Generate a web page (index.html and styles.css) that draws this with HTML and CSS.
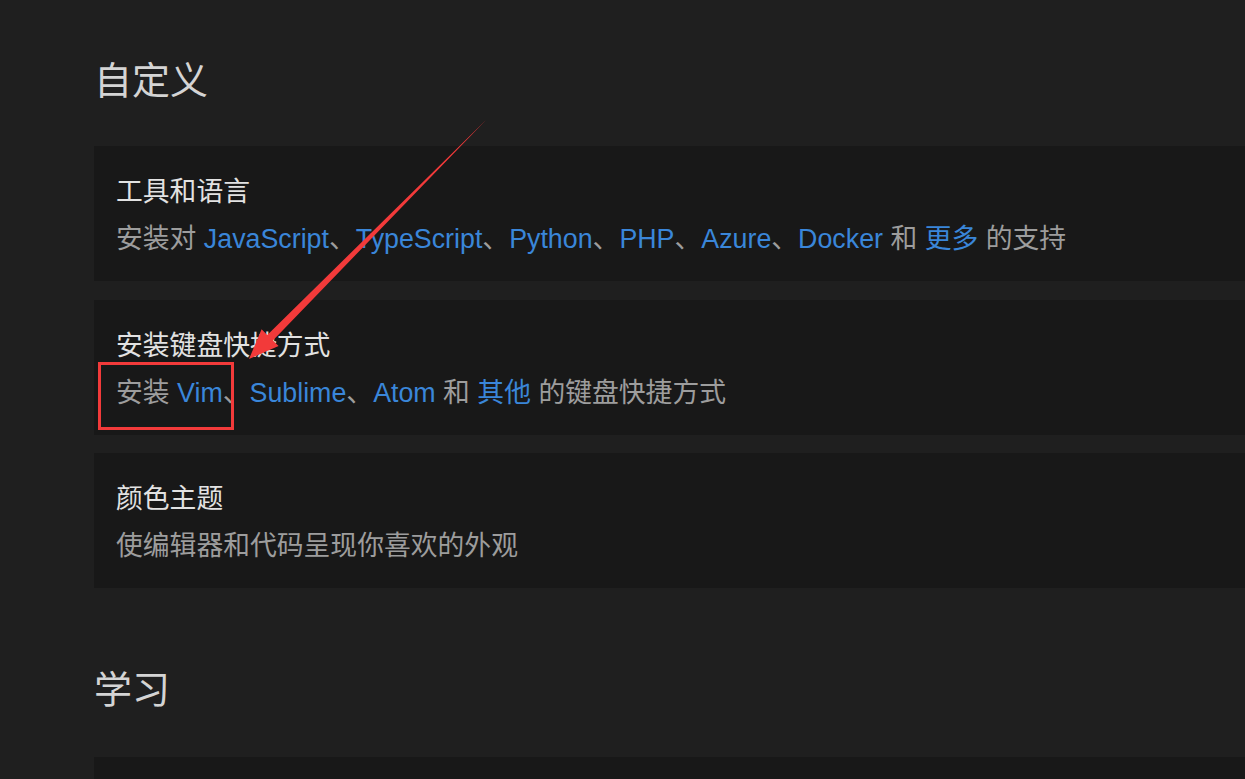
FILE: index.html
```html
<!DOCTYPE html>
<html lang="zh-CN">
<head>
<meta charset="utf-8">
<title>自定义</title>
<link rel="stylesheet" href="styles.css">
</head>
<body>
<main class="page">
  <section class="section">
    <h2 class="heading">自定义</h2>
    <div class="cards">
      <div class="card">
        <div class="card-title">工具和语言</div>
        <div class="card-desc">安装对 <a class="link">JavaScript</a>、<a class="link">TypeScript</a>、<a class="link">Python</a>、<a class="link">PHP</a>、<a class="link">Azure</a>、<a class="link">Docker</a> 和 <a class="link">更多</a> 的支持</div>
      </div>
      <div class="card">
        <div class="card-title">安装键盘快捷方式</div>
        <div class="card-desc">安装 <a class="link">Vim</a>、<a class="link">Sublime</a>、<a class="link">Atom</a> 和 <a class="link">其他</a> 的键盘快捷方式</div>
      </div>
      <div class="card">
        <div class="card-title">颜色主题</div>
        <div class="card-desc">使编辑器和代码呈现你喜欢的外观</div>
      </div>
    </div>
  </section>
  <section class="section section-learn">
    <h2 class="heading">学习</h2>
    <div class="cards cards-learn">
      <div class="card card-peek"></div>
    </div>
  </section>
</main>
<svg class="annotations" width="1245" height="779" viewBox="0 0 1245 779" xmlns="http://www.w3.org/2000/svg">
  <polygon fill="#f23a3a" points="486,120 272.9,340.5 278.6,346.1 249,359 261.6,329.3 267.3,334.9"/>
  <rect x="99.5" y="363.5" width="133" height="65" fill="none" stroke="#f23a3a" stroke-width="3"/>
</svg>
</body>
</html>
```

FILE: styles.css
```css
html, body {
  margin: 0;
  padding: 0;
  background: #1f1f1f;
  overflow: hidden;
  height: 100%;
}

body {
  font-family: "Liberation Sans", "Noto Sans CJK SC", sans-serif;
  color: #cccccc;
  position: relative;
}

.page {
  padding: 58px 0 0 94px;
}

.heading {
  margin: 0;
  font-size: 38px;
  line-height: 46px;
  font-weight: normal;
  color: #d4d4d4;
}

.section-learn {
  margin-top: 79px;
}

.cards {
  margin-top: 42px;
  display: flex;
  flex-direction: column;
  gap: 18.5px;
}

.cards-learn {
  margin-top: 44px;
}

.card {
  background: #181818;
  height: 135px;
  box-sizing: border-box;
  padding: 28px 22px 0 22px;
}

.card-peek {
  height: 22px;
}

.card-title {
  font-size: 26.8px;
  line-height: 36px;
  color: #e2e2e2;
}

.card-desc {
  margin-top: 11px;
  font-size: 26.8px;
  line-height: 36px;
  color: #9d9d9d;
  white-space: nowrap;
}

.link {
  color: #3a86d9;
  text-decoration: none;
}

.annotations {
  position: absolute;
  left: 0;
  top: 0;
  pointer-events: none;
}
```
